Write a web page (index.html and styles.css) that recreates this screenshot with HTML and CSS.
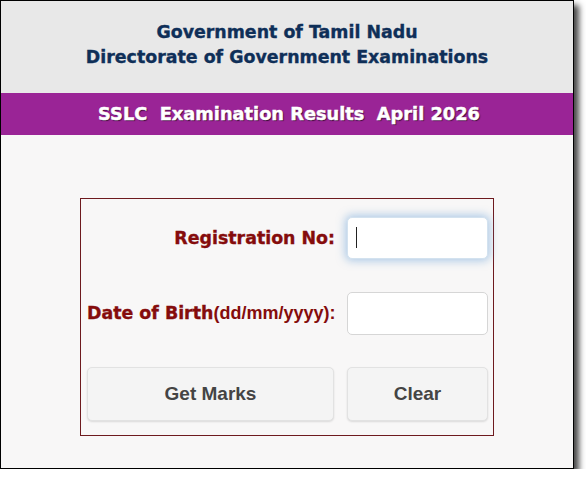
FILE: index.html
```html
<!DOCTYPE html>
<html>
<head>
<meta charset="utf-8">
<title>SSLC Examination Results</title>
<link rel="stylesheet" href="styles.css">
</head>
<body>
<div class="frame">
  <header class="head">
    <div class="head-line">Government of Tamil Nadu</div>
    <div class="head-line">Directorate of Government Examinations</div>
  </header>
  <div class="band">SSLC&nbsp; Examination Results&nbsp; April 2026</div>
  <main class="content">
    <form class="panel" onsubmit="return false">
      <label class="lbl" for="reg">Registration No:</label>
      <div class="field focused">
        <input id="reg" class="inp inp-focus" type="text">
        <span class="caret"></span>
      </div>
      <label class="lbl" for="dob">Date of Birth<span class="hint">(dd/mm/yyyy):</span></label>
      <div class="field">
        <input id="dob" class="inp" type="text">
      </div>
      <button class="btn" type="button">Get Marks</button>
      <button class="btn" type="button">Clear</button>
    </form>
  </main>
</div>
</body>
</html>
```

FILE: styles.css
```css
* { box-sizing: border-box; }
html, body { margin: 0; padding: 0; background: #ffffff; }
body { font-family: "DejaVu Sans", Verdana, sans-serif; }

.frame {
  width: 574px;
  height: 469px;
  border: 1px solid #000;
  background: #f8f7f7;
  box-shadow: 5px 5px 6px rgba(0, 0, 0, 0.72);
  display: flex;
  flex-direction: column;
}

.head {
  background: #e8e8e8;
  height: 92px;
  padding-top: 19px;
  text-align: center;
  color: #0f2f58;
  font-weight: bold;
  font-size: 17.4px;
  line-height: 25px;
  -webkit-text-stroke: 0.35px #0f2f58;
}

.band {
  background: #9a2496;
  height: 42px;
  line-height: 42px;
  text-align: center;
  color: #ffffff;
  font-weight: bold;
  font-size: 17.8px;
  padding-left: 4px;
  text-shadow: 1px 1px 1px #3a0a38;
  -webkit-text-stroke: 0.45px #ffffff;
}

.content {
  flex: 1;
  padding: 63px 0 0 79px;
}

.panel {
  width: 414px;
  height: 238px;
  border: 1px solid #6e1a1e;
  padding: 18px 6px 0 6px;
  display: grid;
  grid-template-columns: 247px 141px;
  grid-template-rows: 42px 43px 54px;
  column-gap: 13px;
  row-gap: 33px;
  align-items: center;
}

.lbl {
  text-align: right;
  color: #850c0c;
  font-weight: bold;
  font-size: 17.4px;
  white-space: nowrap;
  margin-right: -1px;
  -webkit-text-stroke: 0.35px #850c0c;
}
.hint {
  font-family: "Liberation Sans", Arial, sans-serif;
  font-weight: bold;
  font-size: 18px;
  -webkit-text-stroke: 0;
}

.field { position: relative; height: 100%; }
.inp {
  display: block;
  width: 100%;
  height: 100%;
  border: 1px solid #d6d6d6;
  border-radius: 5px;
  background: #fff;
  outline: none;
  font-size: 16px;
}
.inp-focus {
  border-color: #d3e2ef;
  box-shadow: 0 0 8px 2px rgba(102, 160, 215, 0.5);
}
.caret {
  position: absolute;
  left: 9px;
  top: 10px;
  width: 1px;
  height: 21px;
  background: #222;
}

.btn {
  height: 54px;
  margin-top: -3px;
  border: 1px solid #e2e2e2;
  border-radius: 5px;
  background: #f4f4f4;
  box-shadow: 0 1px 2px rgba(0, 0, 0, 0.12);
  color: #444;
  font-family: "Liberation Sans", Arial, sans-serif;
  font-weight: bold;
  font-size: 19px;
}
```
